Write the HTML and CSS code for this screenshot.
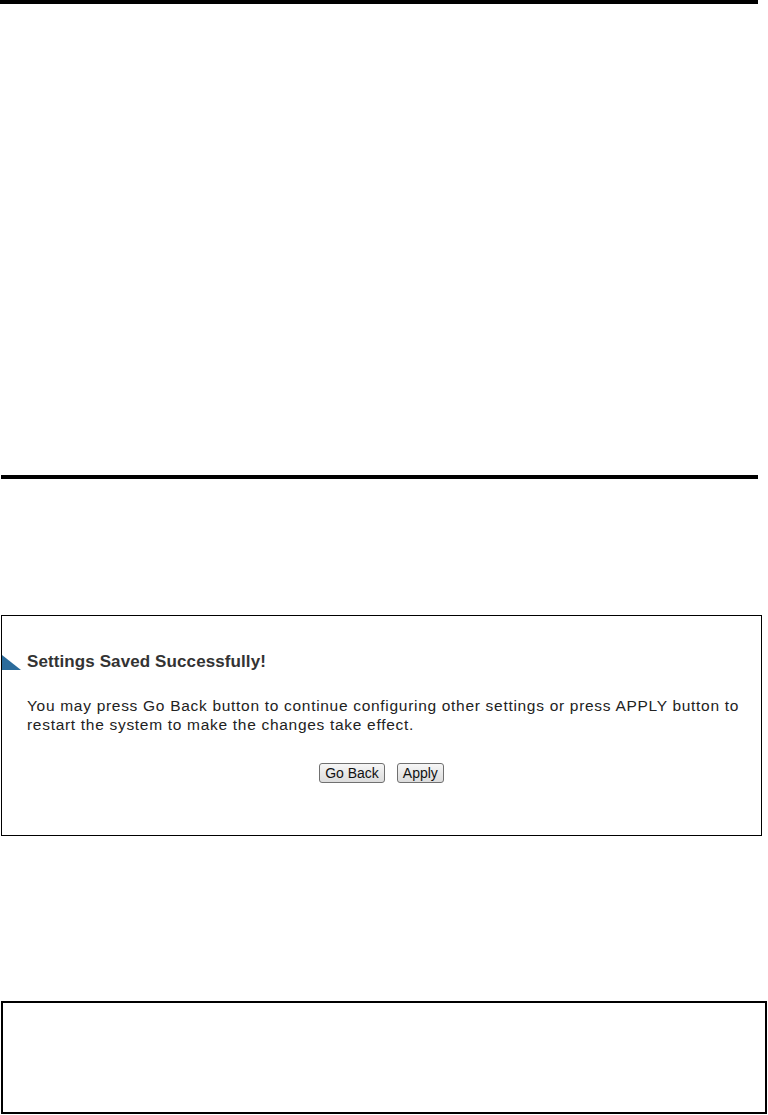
FILE: index.html
```html
<!DOCTYPE html>
<html lang="en">
<head>
    <meta charset="UTF-8">
    <meta name="viewport" content="width=device-width, initial-scale=1.0">
    <title>Settings Saved</title>
    <link rel="stylesheet" href="styles.css">
</head>
<body>
    <div class="page">
        <div class="rule rule-top"></div>
        <div class="rule rule-mid"></div>

        <div class="saved-box">
            <div class="saved-title">
                <svg class="marker" width="19" height="16" viewBox="0 0 19 16">
                    <polygon points="0,1 19,16 0,16" fill="#2b6b9b"/>
                </svg>
                <span>Settings Saved Successfully!</span>
            </div>
            <p class="saved-text">You may press Go Back button to continue configuring other settings or press APPLY button to restart the system to make the changes take effect.</p>
            <div class="button-row">
                <button class="btn btn-back">Go Back</button>
                <button class="btn btn-apply">Apply</button>
            </div>
        </div>

        <div class="empty-box"></div>
    </div>
</body>
</html>
```

FILE: styles.css
```css
body {
    margin: 0;
    padding: 0;
    background: white;
    font-family: 'Liberation Sans', Arial, sans-serif;
    color: #222;
}

.page {
    width: 768px;
    height: 1115px;
    overflow: hidden;
}

.rule {
    background: black;
    height: 4px;
}

.rule-top {
    width: 758px;
}

.rule-mid {
    margin-top: 471px;
    margin-left: 1px;
    width: 757px;
}

.saved-box {
    box-sizing: border-box;
    margin-top: 136px;
    margin-left: 1px;
    width: 761px;
    height: 221px;
    border: 1px solid black;
    padding: 36px 10px 0 0;
}

.saved-title {
    display: flex;
    align-items: flex-end;
    height: 20px;
    font-size: 17px;
    font-weight: bold;
    letter-spacing: 0.1px;
    color: #333;
}

.marker {
    margin: 0 6px 2px 0;
}

.saved-text {
    margin: 24px 0 0 25px;
    font-size: 15.5px;
    line-height: 19px;
    letter-spacing: 0.7px;
    color: #222;
}

.button-row {
    display: flex;
    justify-content: center;
    gap: 12px;
    margin-top: 29px;
    padding-left: 10px;
}

.btn {
    height: 20px;
    padding: 0 5px;
    border: 1px solid #707070;
    border-radius: 3px;
    background: linear-gradient(#f6f6f6, #dcdcdc);
    font-family: 'Liberation Sans', Arial, sans-serif;
    font-size: 14px;
    color: #111;
}

.empty-box {
    box-sizing: border-box;
    margin-top: 165px;
    margin-left: 1px;
    width: 766px;
    height: 113px;
    border: 2px solid black;
}
```
